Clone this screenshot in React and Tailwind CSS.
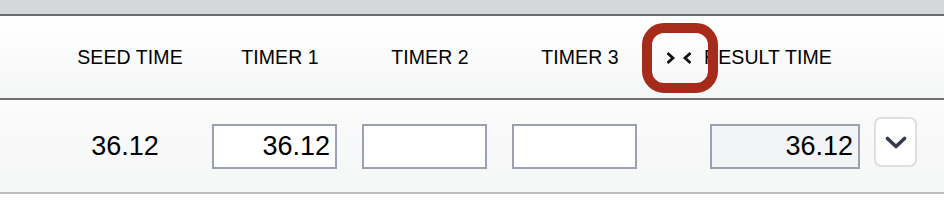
function Collapse() {
  return (
    <svg viewBox="0 0 24 12" className="w-[24px] h-[12px]" fill="none" stroke="#111" strokeWidth="2.8" strokeLinecap="square" strokeLinejoin="miter">
      <polyline points="1.5,2 6,6 1.5,10" />
      <polyline points="22.5,2 18,6 22.5,10" />
    </svg>
  );
}

function Chevron() {
  return (
    <svg viewBox="0 0 22 13" className="w-[22px] h-[13px]" fill="none" stroke="currentColor" strokeWidth="3.6" strokeLinecap="round" strokeLinejoin="round">
      <polyline points="2.5,2.5 11,10.5 19.5,2.5" />
    </svg>
  );
}

export default function App() {
  const font = { fontFamily: '"Liberation Sans", Arial, sans-serif' };
  return (
    <div className="w-[944px] h-[208px] bg-white text-black" style={font}>
      <div className="h-[14px] bg-[#d5d8da]" />
      <div className="h-[2px] bg-[#6b6b6b]" />

      <div className="h-[82px] flex items-center pl-[55px] pt-[2px] bg-gradient-to-b from-[#ffffff] to-[#f5f6f6] text-[19.5px] tracking-[0.1px]">
        <div className="w-[150px] text-center">SEED TIME</div>
        <div className="w-[150px] text-center">TIMER 1</div>
        <div className="w-[150px] text-center">TIMER 2</div>
        <div className="w-[150px] text-center">TIMER 3</div>
        <div className="relative ml-[12px] flex items-center">
          <Collapse />
          <div className="absolute left-[-25px] top-[-29px] w-[76px] h-[70px] rounded-[22px] border-[10px] border-[#a72b1b]" />
        </div>
        <div className="ml-[13px]">RESULT TIME</div>
      </div>

      <div className="h-[2px] bg-[#6f6f6f]" />

      <div className="h-[92px] flex items-center pl-[50px] bg-gradient-to-b from-[#fbfbfb] to-[#f5f6f6] text-[27px]">
        <div className="w-[150px] text-center">36.12</div>
        <div className="ml-[12px] w-[125px] h-[45px] bg-white border-2 border-[#9ca1af] flex items-center justify-end pr-[5px]">36.12</div>
        <div className="ml-[25px] w-[125px] h-[45px] bg-white border-2 border-[#9ca1af]" />
        <div className="ml-[25px] w-[125px] h-[45px] bg-white border-2 border-[#9ca1af]" />
        <div className="ml-[73px] w-[150px] h-[45px] bg-[#f3f4f5] border-2 border-[#9ca1af] flex items-center justify-end pr-[5px]">36.12</div>
        <button className="ml-[14px] mb-[8px] w-[43px] h-[50px] bg-white border-2 border-[#dcdee2] rounded-[7px] flex items-center justify-center text-[#353b4b]">
          <Chevron />
        </button>
      </div>

      <div className="h-[2px] bg-[#bdbdbd]" />
    </div>
  );
}
